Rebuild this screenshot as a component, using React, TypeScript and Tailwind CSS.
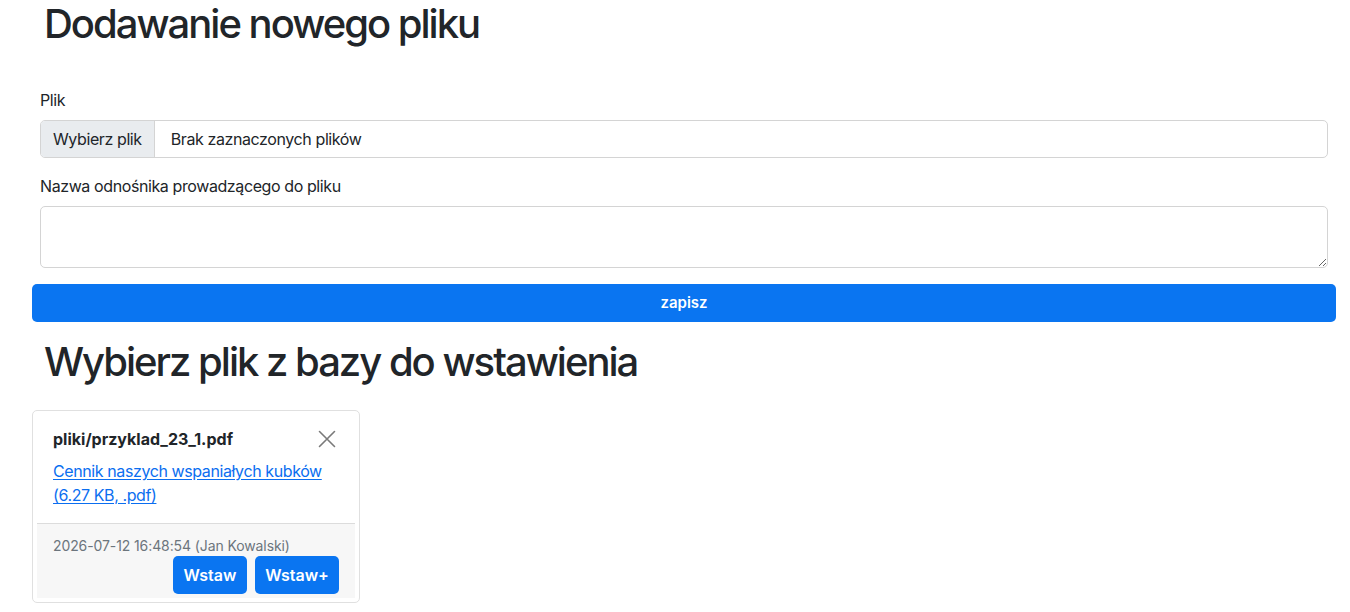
import React from 'react';

const blue = 'bg-[#0a75f1]';

const CloseIcon: React.FC = () => (
  <svg width="18" height="18" viewBox="0 0 18 18" fill="none" stroke="#7a7a7a" strokeWidth="1.6" strokeLinecap="round">
    <path d="M1.5 1.5 L16.5 16.5 M16.5 1.5 L1.5 16.5" />
  </svg>
);

const FileCard: React.FC = () => (
  <div className="w-[328px] rounded-[5px] border border-[#e0e0e0] p-[4px] pb-[4px]">
    <div className="px-4 pt-[12px] pb-4">
      <div className="flex items-center justify-between">
        <h5 className="text-[16px] leading-6 font-bold text-[#212529]">pliki/przyklad_23_1.pdf</h5>
        <button className="flex h-6 w-6 items-center justify-center">
          <CloseIcon />
        </button>
      </div>
      <a href="#" className="mt-2 block text-[16px] leading-6 tracking-[-0.4px] text-[#0b6ef0] underline underline-offset-2">
        Cennik naszych wspaniałych kubków (6.27 KB, .pdf)
      </a>
    </div>
    <div className="border-t border-[#dcdcdc] bg-[#f7f7f7] px-4 pt-[11px] pb-[4px]">
      <div className="text-[14px] leading-[21px] tracking-[-0.1px] text-[#6c757d]">2026-07-12 16:48:54 (Jan Kowalski)</div>
      <div className="flex justify-end gap-2">
        <button className={`${blue} h-[38px] w-[74px] rounded-[5px] text-[16px] font-semibold text-white`}>Wstaw</button>
        <button className={`${blue} h-[38px] w-[84px] rounded-[5px] text-[16px] font-semibold text-white`}>Wstaw+</button>
      </div>
    </div>
  </div>
);

const App: React.FC = () => {
  return (
    <div className="min-h-screen bg-white pl-[32px] pr-[14px] text-[#212529]" style={{ fontFamily: 'Inter, "Noto Sans", sans-serif' }}>
      <h1 className="px-3 text-[40px] leading-[48px] font-medium tracking-[-2px]">Dodawanie nowego pliku</h1>

      <form className="mt-10 px-2 tracking-[-0.4px]" onSubmit={e => e.preventDefault()}>
        <label className="mb-2 block text-[16px] leading-6">Plik</label>
        <div className="flex h-[38px] overflow-hidden rounded-[5px] border border-[#d4d4d4]">
          <span className="flex items-center border-r border-[#d4d4d4] bg-[#e9ecef] px-[12px] text-[16px]">Wybierz plik</span>
          <span className="flex items-center px-4 text-[16px]">Brak zaznaczonych plików</span>
        </div>

        <label className="mt-4 mb-2 block text-[16px] leading-6">Nazwa odnośnika prowadzącego do pliku</label>
        <textarea className="block h-[62px] w-full rounded-[5px] border border-[#d4d4d4] px-3 py-1.5 outline-none" />
      </form>

      <button className={`${blue} mt-4 block h-[38px] w-full rounded-[5px] text-[15px] font-semibold text-white`}>zapisz</button>

      <h2 className="mt-4 px-3 text-[40px] leading-[48px] font-medium tracking-[-2px]">Wybierz plik z bazy do wstawienia</h2>

      <div className="mt-6">
        <FileCard />
      </div>
    </div>
  );
};

export default App;
